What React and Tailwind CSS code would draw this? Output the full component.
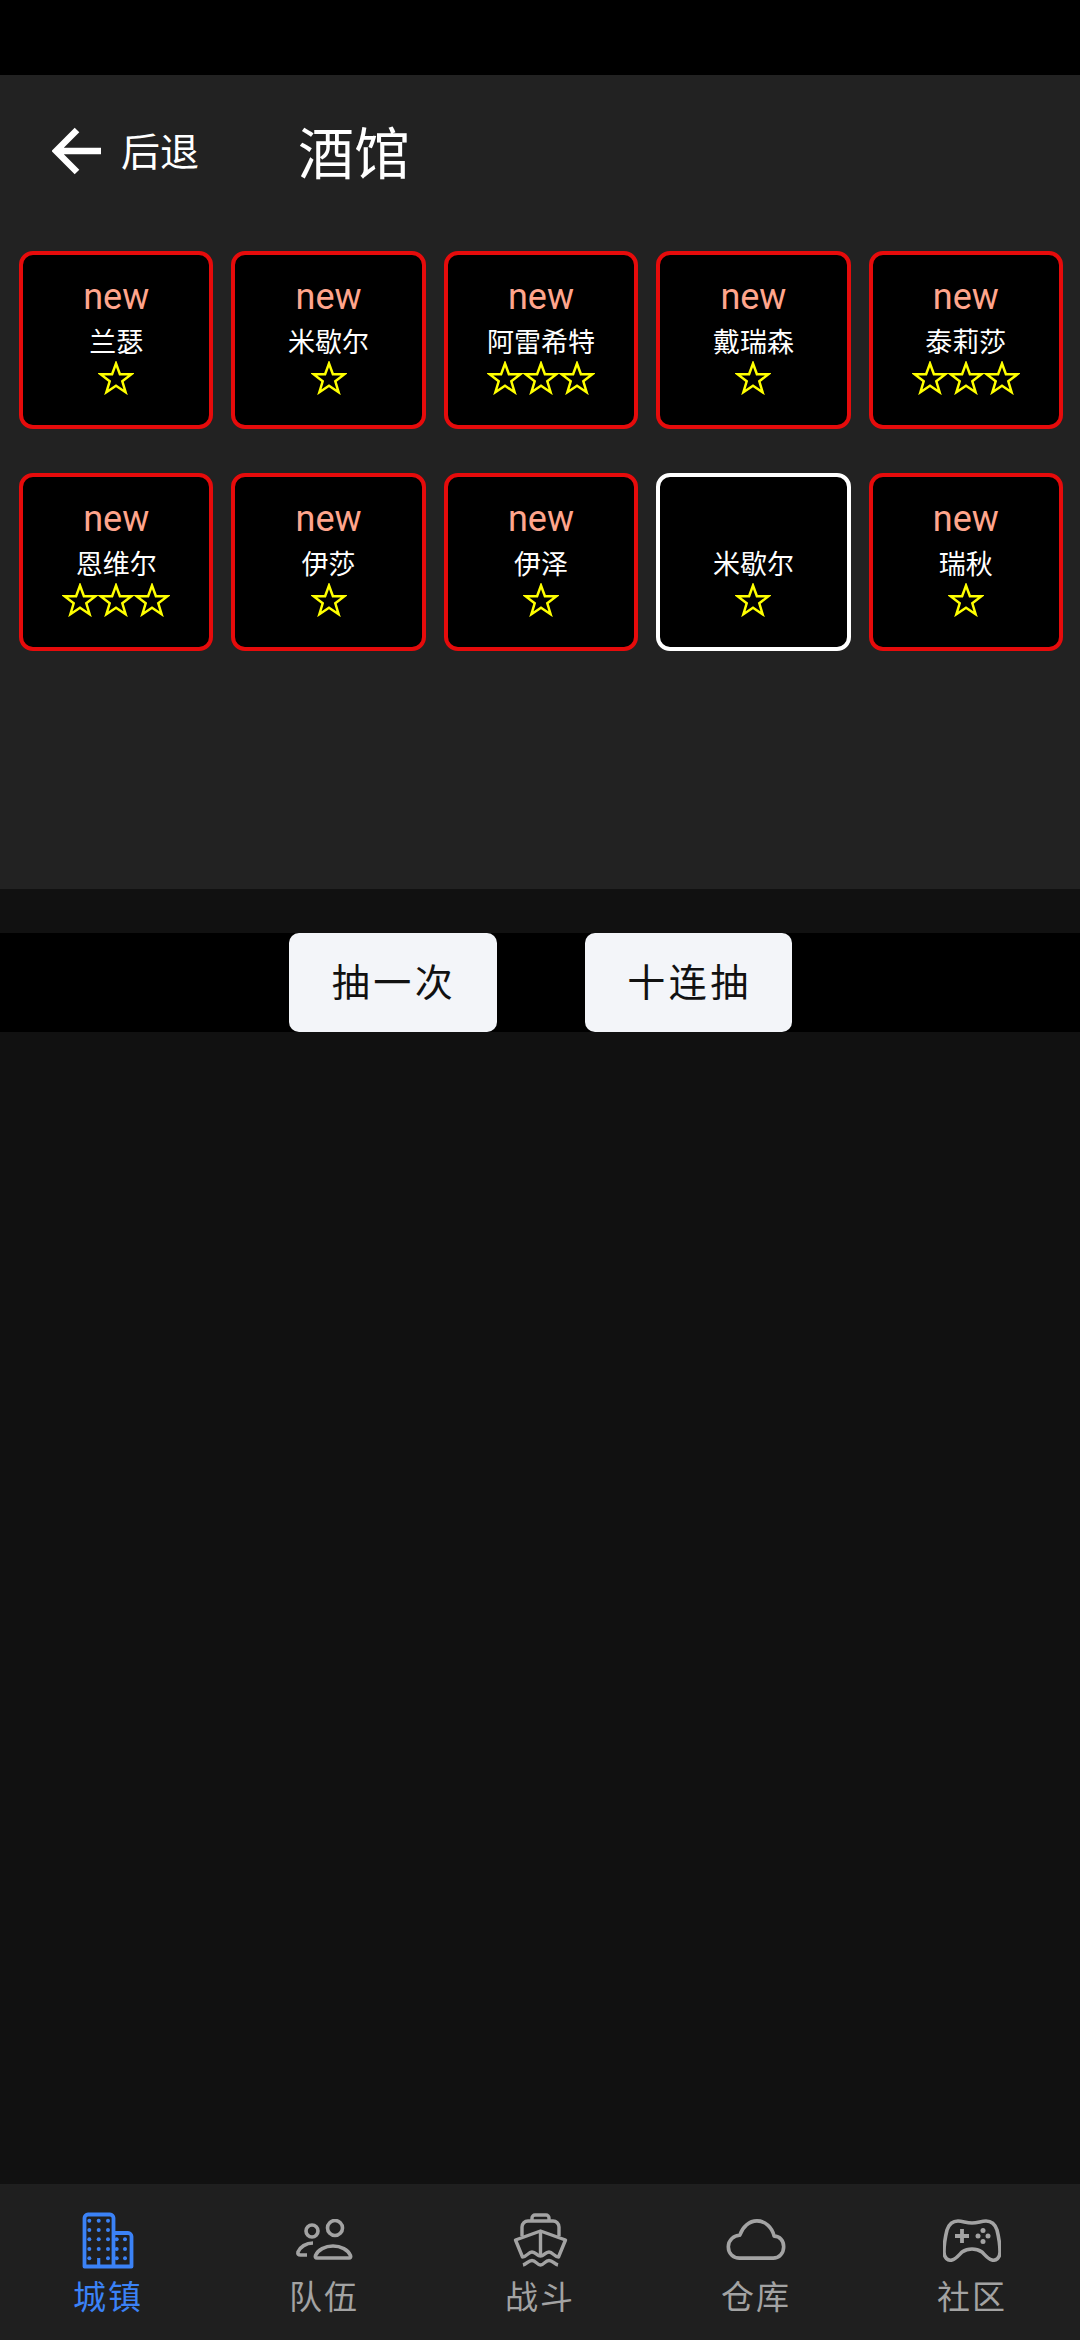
const font = { fontFamily: '"Noto Sans CJK SC", sans-serif' };

const cards = [
  { name: '兰瑟', stars: 1, isNew: true },
  { name: '米歇尔', stars: 1, isNew: true },
  { name: '阿雷希特', stars: 3, isNew: true },
  { name: '戴瑞森', stars: 1, isNew: true },
  { name: '泰莉莎', stars: 3, isNew: true },
  { name: '恩维尔', stars: 3, isNew: true },
  { name: '伊莎', stars: 1, isNew: true },
  { name: '伊泽', stars: 1, isNew: true },
  { name: '米歇尔', stars: 1, isNew: false },
  { name: '瑞秋', stars: 1, isNew: true },
];

function Star() {
  return (
    <svg width="36" height="34" viewBox="0 0 36 34" className="block">
      <polygon
        points="18,2.500 21.900,13.200 33.500,13.200 24.300,20.300 27.600,31.200 18,24.800 8.400,31.200 11.700,20.300 2.500,13.200 14.100,13.200"
        fill="none"
        stroke="#ffff00"
        strokeWidth="2.500"
      />
    </svg>
  );
}

function Card({ name, stars, isNew }) {
  return (
    <div className={`h-[178px] rounded-[14px] border-[4px] bg-black flex flex-col items-center pt-[21px] ${isNew ? 'border-[#e60b0b]' : 'border-white'}`}>
      <div className="h-[42px] text-[36px] leading-[42px] text-[#ffa58c]" style={{ fontFamily: 'Roboto, sans-serif' }}>
        {isNew ? 'new' : ''}
      </div>
      <div className="mt-[5px] h-[36px] text-[27px] leading-[36px] text-white">{name}</div>
      <div className="flex mt-[2px]">
        {Array.from({ length: stars }).map((_, i) => <Star key={i} />)}
      </div>
    </div>
  );
}

function BuildingIcon() {
  const blue = '#3b82f6';
  const dots = [];
  const xs = [19.3, 28.7, 38];
  const ys = [20.7, 30, 39.3, 49, 58.3];
  ys.forEach((y, r) => xs.forEach((x, c) => {
    if (r === 4 && c === 1) return;
    dots.push(<circle key={`a${r}${c}`} cx={x} cy={y} r="2" fill={blue} />);
  }));
  [46.7, 55].forEach((x, c) => [39.3, 49, 58.3].forEach((y, r) => {
    dots.push(<circle key={`b${r}${c}`} cx={x} cy={y} r="2" fill={blue} />);
  }));
  return (
    <svg width="56" height="60" viewBox="10 10 56 60">
      <path d="M14.500 66.500V18a3.500 3.500 0 0 1 3.500-3.500h22a3.500 3.500 0 0 1 3.500 3.500v48.500zM43.500 33h14.500a3.500 3.500 0 0 1 3.500 3.500v30h-18" fill="none" stroke={blue} strokeWidth="3.800" strokeLinejoin="round" />
      <path d="M28.700 66v-8" stroke={blue} strokeWidth="3.200" />
      {dots}
    </svg>
  );
}

function TeamIcon() {
  return (
    <svg width="58" height="42" viewBox="0 0 58 42" fill="none" stroke="#a3a3a3" strokeWidth="3.600">
      <circle cx="17" cy="12" r="6" />
      <circle cx="40" cy="9" r="7.500" />
      <path d="M18 24c-7 0-13 4-15 9-.5 2 .5 3 2.500 3H12" />
      <path d="M22 39c-1.500 0-2-1-1.500-2.500C23 31 30 27 38 27s15 4 17.500 9.500c.5 1.500 0 2.500-1.500 2.500z" strokeLinejoin="round" />
    </svg>
  );
}

function BattleIcon() {
  return (
    <svg width="56" height="56" viewBox="22 12 56 56" fill="none" stroke="#a3a3a3" strokeWidth="3.400" strokeLinejoin="round">
      <path d="M42 21v-3a3 3 0 0 1 3-3h11a3 3 0 0 1 3 3v3" />
      <path d="M32 36V27a6 6 0 0 1 6-6h25a6 6 0 0 1 6 6v9" />
      <path d="M50.500 31 25.500 40 32.500 57C37 57 38 52 42 52C46 52 47 56 50.500 56C54 56 55 52 59 52C63 52 64 57 68.500 57L75.500 40Z" />
      <path d="M50.500 31V55" />
      <path d="M33 65C37 64 38 60.500 42 60.500C46 60.500 47 65 50.500 65C54 65 55 60.500 59 60.500C63 60.500 64 64 68 65" />
    </svg>
  );
}

function CloudIcon() {
  return (
    <svg width="62" height="42" viewBox="0 0 62 44" fill="none" stroke="#a3a3a3" strokeWidth="3.800">
      <path d="M14 41C7 41 2 36 2 29c0-7 6-12 12-12 3-9 10-15 18-15 9 0 16 7 18 16 6 0 10 5 10 11 0 7-5 12-11 12z" strokeLinejoin="round" />
    </svg>
  );
}

function GameIcon() {
  return (
    <svg width="58" height="44" viewBox="0 0 58 44" fill="none" stroke="#a3a3a3" strokeWidth="3.600">
      <path d="M15 3c5 0 8 2 14 2s9-2 14-2c6 0 9 3 11 9 2 8 3 16 3 22 0 6-4 9-8 8-4-1-7-5-10-8-3-2-6-3-10-3s-7 1-10 3c-3 3-6 7-10 8-4 1-8-2-8-8 0-6 1-14 3-22 2-6 5-9 11-9z" strokeLinejoin="round" />
      <path d="M12 18h14M19 11v14" strokeWidth="3.800" />
      <g fill="#a3a3a3" stroke="none">
        <circle cx="35" cy="18" r="2.500" />
        <circle cx="40" cy="12.500" r="2.500" />
        <circle cx="40" cy="23.500" r="2.500" />
        <circle cx="45" cy="18" r="2.500" />
      </g>
    </svg>
  );
}

const tabs = [
  { label: '城镇', Icon: BuildingIcon, active: true },
  { label: '队伍', Icon: TeamIcon },
  { label: '战斗', Icon: BattleIcon },
  { label: '仓库', Icon: CloudIcon },
  { label: '社区', Icon: GameIcon },
];

export default function App() {
  return (
    <div className="w-[1080px] h-[2340px] flex flex-col bg-[#111111] overflow-hidden" style={font}>
      <div className="h-[75px] shrink-0 bg-black" />
      <div className="h-[814px] shrink-0 bg-[#222222]">
        <div className="h-[152px] mb-[24px] flex items-center pl-[52px]">
          <svg width="50" height="48" viewBox="0 0 50 48" fill="none" stroke="#ffffff" strokeWidth="6.500">
            <path d="M49 24H6M25 3 4 24l21 21" />
          </svg>
          <span className="ml-[19px] mb-[5px] text-[39px] leading-[56px] text-white">后退</span>
          <span className="ml-[99px] mb-[3px] text-[56px] leading-[72px] text-white">酒馆</span>
        </div>
        <div className="grid grid-cols-5 gap-x-[18px] gap-y-[44px] pl-[19px] pr-[17px]">
          {cards.map((c, i) => <Card key={i} {...c} />)}
        </div>
      </div>
      <div className="mt-[44px] h-[99px] shrink-0 bg-black flex justify-center gap-[88px]">
        <button className="w-[208px] h-[99px] pb-[6px] pl-[3px] rounded-[10px] bg-[#f3f5f9] text-[38px] tracking-[3.500px] text-[#111]">抽一次</button>
        <button className="w-[207px] h-[99px] pb-[6px] pl-[3px] rounded-[10px] bg-[#f3f5f9] text-[38px] tracking-[3.500px] text-[#111]">十连抽</button>
      </div>
      <div className="flex-1" />
      <div className="h-[156px] shrink-0 bg-[#1f1f1f] grid grid-cols-5 pt-[26px]">
        {tabs.map(({ label, Icon, active }) => (
          <div key={label} className="flex flex-col items-center">
            <div className="h-[60px] flex items-center justify-center"><Icon /></div>
            <div className={`mt-[3px] text-[33px] leading-[44px] tracking-[2px] ${active ? 'text-[#3b82f6]' : 'text-[#a3a3a3]'}`}>{label}</div>
          </div>
        ))}
      </div>
    </div>
  );
}
